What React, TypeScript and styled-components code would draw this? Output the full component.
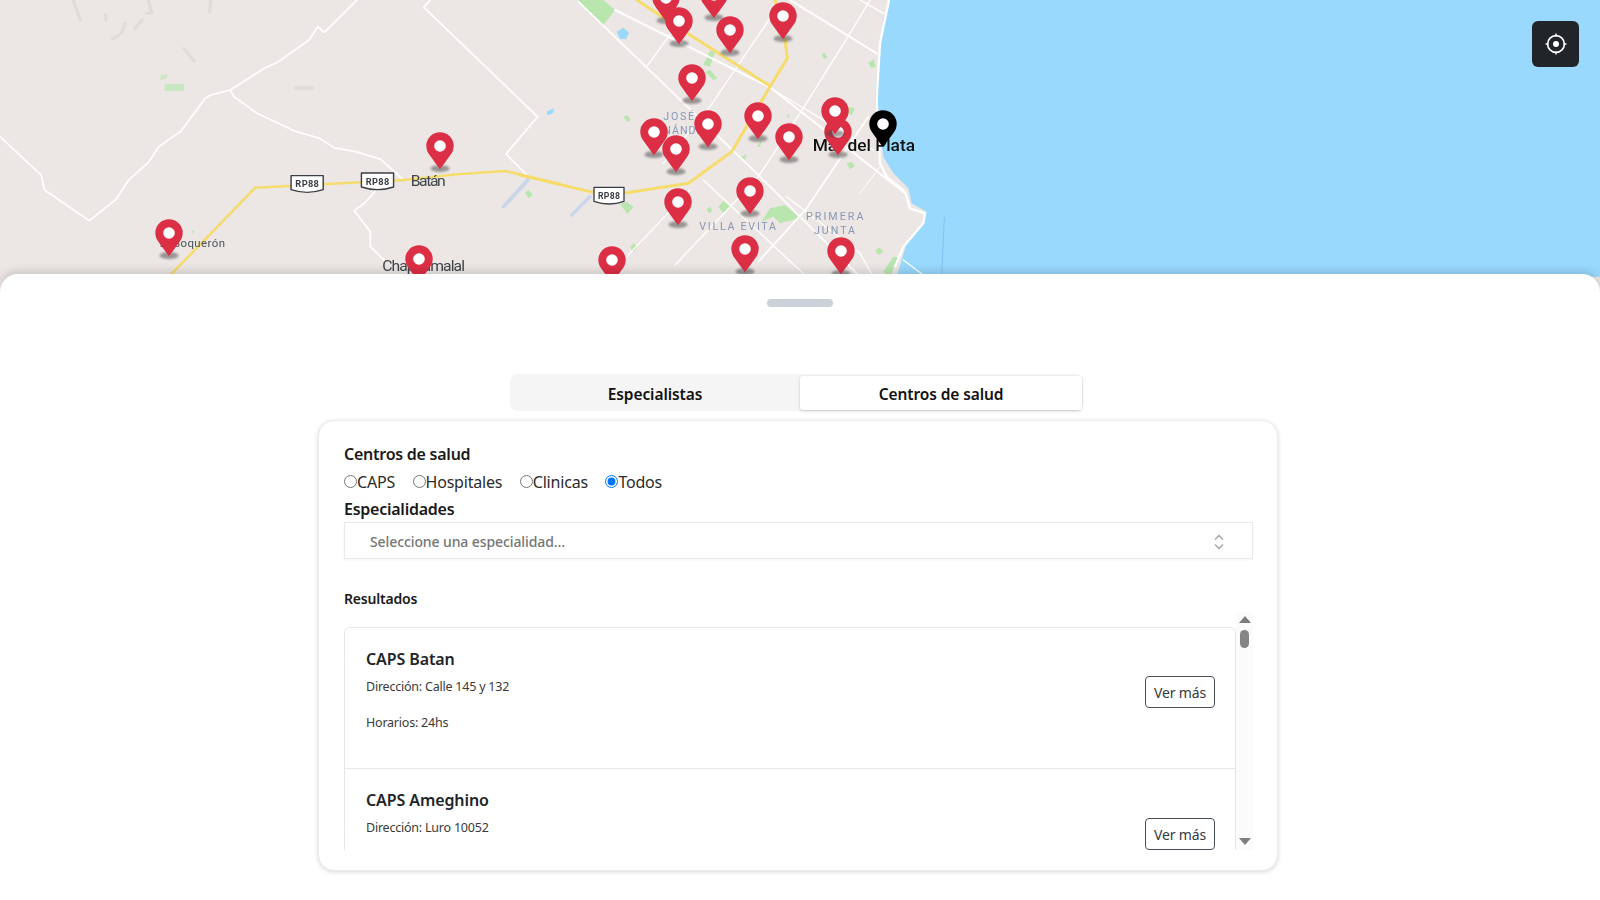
import React from "react";
import styled, { createGlobalStyle } from "styled-components";

const Global = createGlobalStyle`
  html, body { margin: 0; padding: 0; background: #fff; }
  body { font-family: "Noto Sans", "Open Sans", "Liberation Sans", sans-serif; color: #212529; overflow: hidden; }
`;

const Page = styled.div`
  width: 1600px;
  height: 900px;
  overflow: hidden;
  display: flex;
  flex-direction: column;
`;

const MapPane = styled.div`
  position: relative;
  flex: none;
  height: 300px;
  overflow: hidden;
  background: #ece7e4;
`;

const MapDrawing = styled.svg`
  display: block;
  width: 1600px;
  height: 300px;
  filter: blur(0.45px);
`;

const MapPinMark = styled.svg`
  position: absolute;
  width: 28px;
  height: 44px;
  filter: blur(0.25px);
`;

const LocateButton = styled.button`
  position: absolute;
  top: 21px;
  right: 21px;
  width: 47px;
  height: 46px;
  padding: 0;
  border: 0;
  border-radius: 6px;
  background: #212529;
  display: flex;
  align-items: center;
  justify-content: center;
`;

const Sheet = styled.section`
  position: relative;
  flex: 1;
  margin-top: -26px;
  background: #fff;
  border-radius: 18px 18px 0 0;
  box-shadow: 0 -3px 9px rgba(0, 0, 0, 0.14);
  display: flex;
  flex-direction: column;
  align-items: center;
  padding-top: 25px;
`;

const Handle = styled.div`
  width: 66px;
  height: 8px;
  border-radius: 4px;
  background: #cbd2da;
`;

const Tabs = styled.div`
  margin: 67px 7px 0 0;
  width: 573px;
  height: 37px;
  box-sizing: border-box;
  padding: 2px 1px 1px 0;
  border-radius: 8px;
  background: #f5f5f5;
  display: grid;
  grid-template-columns: 290px 282px;
`;

const Tab = styled.button<{ $active?: boolean }>`
  border: 0;
  padding: 1px 0 0;
  font: 600 15.5px "Noto Sans", sans-serif;
  letter-spacing: -0.1px;
  color: #111;
  border-radius: 3px;
  background: ${(p) => (p.$active ? "#fff" : "transparent")};
  box-shadow: ${(p) => (p.$active ? "0 1px 3px rgba(0,0,0,.2)" : "none")};
`;

const Card = styled.div`
  margin: 9px 4px 0 0;
  width: 960px;
  height: 451px;
  box-sizing: border-box;
  padding: 22px 24px 0 25px;
  border: 1px solid #ececec;
  border-radius: 16px;
  box-shadow: 0 1px 4px rgba(0, 0, 0, 0.16);
  background: #fff;
  display: flex;
  flex-direction: column;
`;

const FieldLabel = styled.div`
  font-size: 16px;
  font-weight: 600;
  line-height: 22px;
  color: #1a1a1a;
  letter-spacing: -0.25px;
`;

const RadioRow = styled.div`
  display: flex;
  gap: 17.5px;
  height: 33px;
  align-items: center;
`;

const RadioOption = styled.label`
  display: flex;
  align-items: center;
  font-size: 16px;
  color: #2b2b2b;
  letter-spacing: -0.2px;
`;

const Radio = styled.input`
  margin: 0;
  width: 13px;
  height: 13px;
`;

const SelectBox = styled.div`
  margin-top: 2px;
  height: 37px;
  width: 909px;
  box-sizing: border-box;
  border: 1px solid #e9e9e9;
  box-shadow: 0 1px 2px rgba(0, 0, 0, 0.05);
  padding: 2px 26px 0 25px;
  display: flex;
  align-items: center;
  justify-content: space-between;
  font-size: 14px;
  font-weight: 500;
  color: #757575;
  letter-spacing: -0.1px;
`;

const ResultsTitle = styled.div`
  margin-top: 29px;
  font-size: 14px;
  font-weight: 600;
  line-height: 22px;
  color: #1a1a1a;
  letter-spacing: -0.2px;
`;

const ResultsArea = styled.div`
  margin-top: 2px;
  width: 909px;
  height: 238px;
  display: flex;
`;

const ResultsClip = styled.div`
  flex: 1;
  min-width: 0;
  overflow: hidden;
  padding-top: 15px;
`;

const ResultsList = styled.div`
  border: 1px solid #e7e7e7;
  border-bottom: 0;
  border-radius: 6px 6px 0 0;
`;

const MoreButton = styled.button`
  margin-top: 29px;
  width: 70px;
  height: 32px;
  padding: 0;
  background: #fff;
  border: 1px solid #495057;
  border-radius: 4px;
  font: 400 14px "Noto Sans", sans-serif;
  letter-spacing: -0.15px;
  color: #343a40;
`;

const ResultItem = styled.article`
  height: 140px;
  box-sizing: border-box;
  padding: 19px 20px 0 21px;
  display: flex;
  justify-content: space-between;
  align-items: flex-start;
  & + & { border-top: 1px solid #e7e7e7; height: 141px; }
  & + & ${MoreButton} { margin-top: 30px; }
`;

const ResultTitle = styled.h3`
  margin: 0 0 6px;
  font-size: 16px;
  line-height: 24px;
  font-weight: 600;
  color: #212529;
  letter-spacing: -0.1px;
`;

const ResultLine = styled.p`
  margin: 0 0 16px;
  font-size: 12.5px;
  line-height: 20px;
  color: #3a3a3a;
  letter-spacing: -0.22px;
`;

const ScrollTrack = styled.div`
  flex: none;
  width: 17px;
  background: #fbfbfb;
  display: flex;
  flex-direction: column;
  align-items: center;
  padding-top: 4px;
  box-sizing: border-box;
`;

const ScrollArrow = styled.div<{ $down?: boolean }>`
  width: 0;
  height: 0;
  border-left: 6px solid transparent;
  border-right: 6px solid transparent;
  ${(p) => (p.$down ? "border-top: 7px solid #7d7d7d; margin-top: auto; margin-bottom: 5px;" : "border-bottom: 7px solid #7d7d7d;")}
`;

const ScrollThumb = styled.div`
  margin-top: 7px;
  width: 9px;
  height: 18px;
  border-radius: 5px;
  background: #858585;
`;

type P = [number, number];
const z2 = (x: number, y: number): P => [x / 3 + 540, y / 3];
const z1 = (x: number, y: number): P => [x / 2.8, y / 3];

const pins: P[] = [
  z2(378, -5), z2(522, -14), z2(416, 62), z2(570, 90), z2(729, 47), z2(455, 234),
  z2(342, 397), z2(407, 447), z2(505, 372), z2(654, 347), z2(748, 412),
  z2(895, 397), z2(886, 332), z2(630, 574), z2(414, 606), z2(217, 781),
  z2(614, 747), z2(904, 752), z1(1233, 437), z1(474, 700), z1(1172, 778),
];

const Pin = ({ at, black }: { at: P; black?: boolean }) => (
  <MapPinMark viewBox="0 0 28 44" style={{ left: at[0] - 14, top: at[1] - 14 }}>
    <defs>
      <filter id="pinShadow" x="-30%" y="-60%" width="160%" height="220%">
        <feGaussianBlur stdDeviation="1.1" />
      </filter>
    </defs>
    {!black && <ellipse cx="14" cy="36.5" rx="9.5" ry="3.6" fill="#444" opacity="0.5" filter="url(#pinShadow)" />}
    <path
      d="M14 37.3C13 35.6 6.5 27.2 3.6 22.9A13.7 13.7 0 1 1 24.4 22.9C21.5 27.2 15 35.6 14 37.3Z"
      fill={black ? "#000" : "#dc2f45"}
    />
    <circle cx="14" cy="14" r="5.8" fill="#fff" />
  </MapPinMark>
);

const Shield = ({ x, y }: { x: number; y: number }) => (
  <g transform={`translate(${x} ${y})`}>
    <path d="M-45-26H45V16Q0 32-45 16Z" fill="#fff" stroke="#3a3f45" strokeWidth="4" strokeLinejoin="round" />
    <text x="0" y="9" textAnchor="middle" fontFamily="Roboto, sans-serif" fontWeight="700" fontSize="26" fill="#3a3f45" textLength="66">
      RP88
    </text>
  </g>
);

const MapBase = () => (
  <MapDrawing viewBox="0 0 1600 300">
    <rect width="1600" height="300" fill="#ece7e4" />
    <g transform="scale(0.35714 0.33333)" fill="none" strokeLinejoin="round" strokeLinecap="round">
      <path d="M1000 0L908 97L890 80L865 120L780 185L740 205L645 270L590 285L575 295L505 395L445 440L415 488L360 540L325 598L250 662L125 570L115 525L0 410" stroke="#fff" strokeWidth="5" />
      <path d="M645 270L655 290L720 340L825 393L895 415L935 443L995 455L1065 477L1125 535" stroke="#fff" strokeWidth="5" />
      <path d="M1205 0L1187 22L1505 350L1417 462L1475 525" stroke="#fff" strokeWidth="5" />
      <path d="M1050 575L1020 610L992 632L1037 695L1037 740L1075 780" stroke="#fff" strokeWidth="5" />
      <path d="M205 0L225 60M415 0L425 40L410 40M350 70L340 100L315 118M398 60L378 85M515 145L545 185M590 0L587 35M295 42L297 62" stroke="#e2dcd8" strokeWidth="9" />
      <path d="M828 265H875" stroke="#e2dcd8" strokeWidth="12" />
      <path d="M447 240L452 224H470L465 236ZM462 252H515V273H460Z" fill="#c9e8c2" />
      <path d="M1470 578L1480 570L1492 585L1480 595Z" fill="#b8e6b0" />
      <path d="M1530 340L1550 325L1550 338L1535 346Z" fill="#9ddcff" />
      <path d="M1410 620L1478 540" stroke="#c9d6ea" strokeWidth="11" />
      <path d="M480 822L715 563L1130 540L1280 523L1415 513L1568 552" stroke="#f6dc6c" strokeWidth="7.5" />
      <path d="M540 691l4 4-4 4-4-4Z" fill="#b8e6b0" />
      <Shield x={860} y={553} />
      <Shield x={1057} y={545} />
      <text x="1150" y="558" fontFamily="Roboto, sans-serif" fontSize="44" fill="#3f444a" textLength="98">Batán</text>
      <text x="1070" y="813" fontFamily="Roboto, sans-serif" fontSize="44" fill="#3f444a" textLength="232">Chapadmalal</text>
      <text x="447" y="741" fontFamily="Roboto, sans-serif" fontSize="32" fill="#4b5056" textLength="183">El Boquerón</text>
    </g>
    <g transform="translate(540 0) scale(0.33333)" fill="none" strokeLinejoin="round" strokeLinecap="round">
      <path d="M1050 0L1030 60L1020 130L1005 300L1030 470L1060 520L1105 565L1115 610L1160 635L1150 670L1100 730L1070 830H3300V0Z" fill="#98d9fd" />
      <path d="M1213 652L1205 830" stroke="#7fc4f2" strokeWidth="3" />
      <path d="M115 3L190 75L225 30L190 0H115Z" fill="#b9e6ae" />
      <path d="M230 95L250 83L267 98L258 117H240Z" fill="#9bd9fb" />
      <path d="M20 335L40 325L35 340L25 345Z" fill="#9bd9fb" />
      <path d="M250 350L262 345L272 360L262 366ZM490 195L510 152L525 155L510 200ZM495 215L510 210L532 235L520 240ZM845 165L853 158L862 170L853 178ZM985 190L1000 178L1008 200L995 205ZM925 320L945 325L935 345L922 340ZM920 490L935 485L945 498L930 508ZM605 470L620 462L615 480ZM650 440L665 420L660 440ZM740 350L750 340L745 355ZM498 628L510 620L518 632L508 640ZM535 620L550 603L572 620L550 640ZM240 612L262 605L280 622L262 642ZM270 742L282 730L292 742L280 755ZM1005 752L1018 742L1030 755L1015 765ZM1030 815L1060 770L1075 772L1050 830Z" fill="#b9e6ae" />
      <path d="M665 665L690 625L735 615L780 655L720 670L700 650Z" fill="#b9e6ae" />
      <path d="M95 645L150 590" stroke="#c9d6ea" strokeWidth="10" />
      <g stroke="#fff">
        <path d="M115 5L650 520L960 830" strokeWidth="5" />
        <path d="M225 30L690 262L1095 580" strokeWidth="6" />
        <path d="M750 0L1010 160" strokeWidth="6" />
        <path d="M960 0L1030 40" strokeWidth="4" />
        <path d="M990 0L930 100L780 340L655 530L590 600L405 795" strokeWidth="4" />
        <path d="M985 350L800 625L655 785" strokeWidth="5" />
        <path d="M700 40L510 320L370 490" strokeWidth="4" />
        <path d="M320 200L400 90L450 40" strokeWidth="4" />
        <path d="M490 540L800 830" strokeWidth="4" />
        <path d="M740 590L960 760L1000 830" strokeWidth="4" />
        <path d="M960 580L1020 500" strokeWidth="3" />
        <path d="M450 570L260 770" strokeWidth="4" />
        <path d="M700 270L1000 450" strokeWidth="4" />
        <path d="M1047 0L1020 130L1010 300L1020 490L1040 530L1095 575L1110 625L1155 640L1150 670L1090 740L1065 800" strokeWidth="7" />
        <path d="M1090 780L1150 825" strokeWidth="4" />
      </g>
      <path d="M-60 525L150 575L260 578L445 550L575 455L690 260L742 175L735 120L705 0" stroke="#f6dc6c" strokeWidth="9" />
      <path d="M290 0L450 105L690 258" stroke="#f6dc6c" strokeWidth="9" />
      <Shield x={207} y={588} />
      <g fontFamily="Roboto, sans-serif" fontSize="32" fill="#8797b4">
        <text x="370" y="361" textLength="92">JOSÉ</text>
        <text x="300" y="403" textLength="210">HERNÁNDEZ</text>
        <text x="478" y="691" textLength="230">VILLA EVITA</text>
        <text x="798" y="660" textLength="172">PRIMERA</text>
        <text x="822" y="701" textLength="123">JUNTA</text>
      </g>
      <text x="818" y="454" fontFamily="Roboto, sans-serif" fontWeight="500" fontSize="52" fill="#111" textLength="307">Mar del Plata</text>
    </g>
  </MapDrawing>
);

const results = [
  { name: "CAPS Batan", lines: ["Dirección: Calle 145 y 132", "Horarios: 24hs"] },
  { name: "CAPS Ameghino", lines: ["Dirección: Luro 10052"] },
];

export default function App() {
  return (
    <Page>
      <Global />
      <MapPane>
        <MapBase />
        {pins.map((p, i) => (
          <Pin key={i} at={p} />
        ))}
        <Pin at={z2(1030, 372)} black />
        <LocateButton aria-label="Mi ubicación">
          <svg width="24" height="24" viewBox="0 0 24 24" fill="none" stroke="#fff">
            <circle cx="12" cy="12" r="8.4" strokeWidth="1.6" />
            <circle cx="12" cy="12" r="3" fill="#fff" stroke="none" />
            <path d="M12 1.6v3M12 19.4v3M1.6 12h3M19.4 12h3" strokeWidth="1.4" />
          </svg>
        </LocateButton>
      </MapPane>
      <Sheet>
        <Handle />
        <Tabs>
          <Tab>Especialistas</Tab>
          <Tab $active>Centros de salud</Tab>
        </Tabs>
        <Card>
          <FieldLabel>Centros de salud</FieldLabel>
          <RadioRow>
            {["CAPS", "Hospitales", "Clinicas", "Todos"].map((t) => (
              <RadioOption key={t}>
                <Radio type="radio" name="tipo" defaultChecked={t === "Todos"} />
                {t}
              </RadioOption>
            ))}
          </RadioRow>
          <FieldLabel>Especialidades</FieldLabel>
          <SelectBox>
            <span>Seleccione una especialidad...</span>
            <svg width="14" height="18" viewBox="0 0 14 18" fill="none" stroke="#a3a3a3" strokeWidth="1.3">
              <path d="M3 6.5L7 2.5L11 6.5M3 11.5L7 15.5L11 11.5" />
            </svg>
          </SelectBox>
          <ResultsTitle>Resultados</ResultsTitle>
          <ResultsArea>
            <ResultsClip>
              <ResultsList>
                {results.map((r) => (
                  <ResultItem key={r.name}>
                    <div>
                      <ResultTitle>{r.name}</ResultTitle>
                      {r.lines.map((l) => (
                        <ResultLine key={l}>{l}</ResultLine>
                      ))}
                    </div>
                    <MoreButton>Ver más</MoreButton>
                  </ResultItem>
                ))}
              </ResultsList>
            </ResultsClip>
            <ScrollTrack>
              <ScrollArrow />
              <ScrollThumb />
              <ScrollArrow $down />
            </ScrollTrack>
          </ResultsArea>
        </Card>
      </Sheet>
    </Page>
  );
}
